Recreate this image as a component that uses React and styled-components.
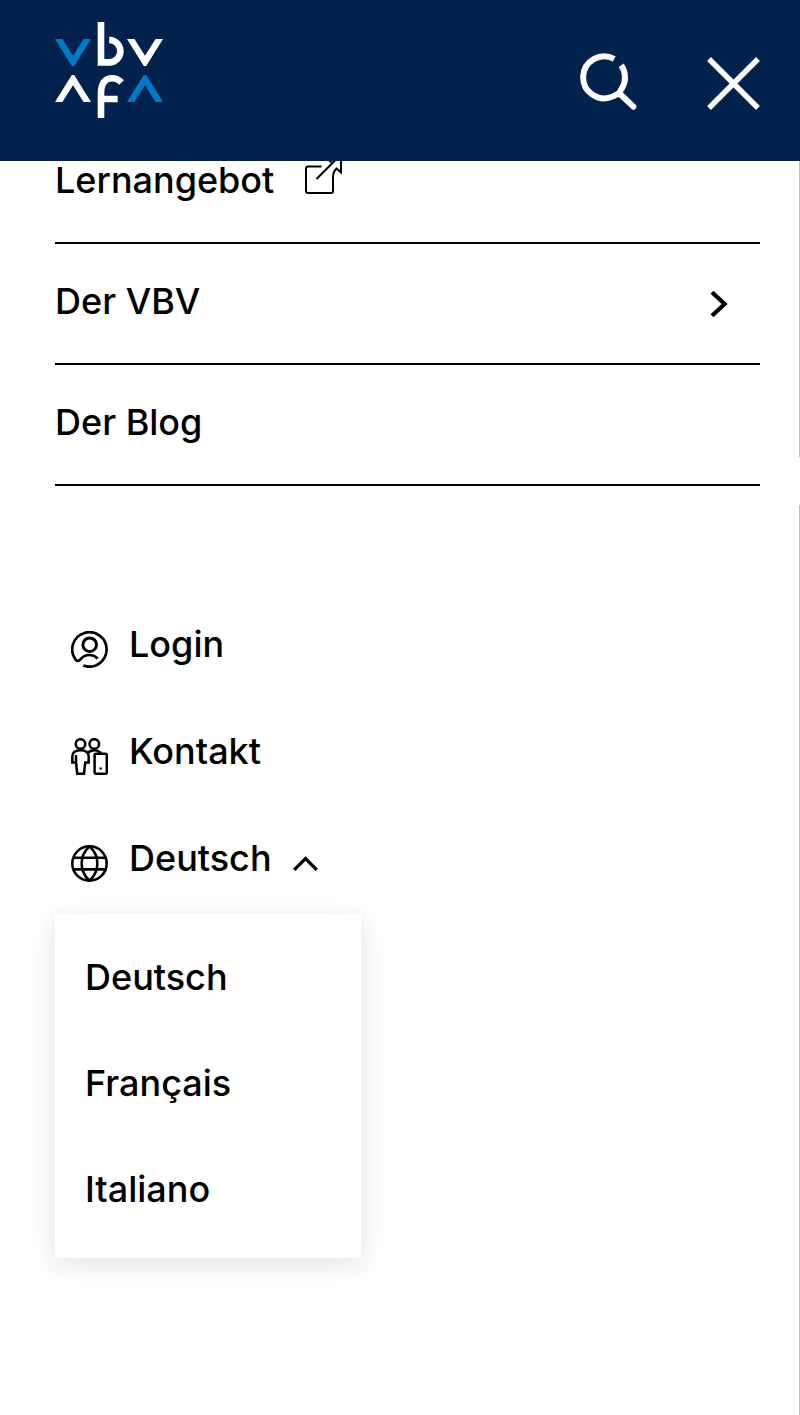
import React, { useState } from "react";
import styled, { createGlobalStyle } from "styled-components";

const GlobalStyle = createGlobalStyle`
    * {
        box-sizing: border-box;
    }

    body {
        margin: 0;
        background: #FFFFFF;
        color: #000000;
        font-family: 'Inter', 'Liberation Sans', sans-serif;
        font-weight: 500;
        font-size: 36px;
        line-height: 42px;
    }

    ul {
        list-style: none;
        margin: 0;
        padding: 0;
    }

    a, button {
        color: inherit;
        font: inherit;
        text-decoration: none;
    }

    button {
        background: none;
        border: none;
        padding: 0;
        cursor: pointer;
    }

    svg {
        display: block;
        flex-shrink: 0;
        fill: none;
    }
`;

function Logo() {
    return (
        <svg width="108" height="96" viewBox="0 0 108 96">
            <path fill="#007AC6" d="M0 17H7.4L18 33.8L28.6 17H36L19.2 44H16.8Z" />
            <path fill="#FFFFFF" d="M72 17H79.4L90 33.8L100.6 17H108L91.2 44H88.8Z" />
            <path fill="#FFFFFF" d="M0 80H7.4L18 63.2L28.6 80H36L19.2 53H16.8Z" />
            <path fill="#007AC6" d="M72 80H79.4L90 63.2L100.6 80H108L91.2 53H88.8Z" />
            <g stroke="#FFFFFF" strokeWidth="6.6">
                <path d="M46 0V40.4H54.2A11.2 11.2 0 0 0 54.2 18" />
                <path d="M46 96V71C46 61 50.5 56.3 57 56.3C61 56.3 64 57.8 66.5 60.5M46 77H62.7" />
            </g>
        </svg>
    )
}

function SearchIcon() {
    return (
        <svg width="57" height="57" viewBox="0 0 57 57" stroke="#FFFFFF" strokeWidth="6">
            <path d="M34.2 5.9A21 21 0 1 0 33 43.4Q37 40.6 40 41" />
            <path d="M41.2 12.3A21 21 0 0 1 41.5 36Q39.3 38.8 40 41" />
            <path d="M39 40L53.4 53.7" strokeLinecap="round" />
        </svg>
    )
}

function CloseIcon() {
    return (
        <svg width="53" height="53" viewBox="0 0 53 53" stroke="#FFFFFF" strokeWidth="5.4">
            <path d="M2 2L51 51M51 2L2 51" />
        </svg>
    )
}

function ExternalIcon() {
    return (
        <svg width="38" height="38" viewBox="0 0 38 38" stroke="#000000" strokeWidth="2">
            <path d="M17.5 10.5H4Q2 10.5 2 12.5V35Q2 37 4 37H27Q29 37 29 35V21C29 17 30.5 14.5 32.5 12.5L37 16.5V1H22L27.5 6.5" />
            <path d="M12.5 23L31 4.5" />
        </svg>
    )
}

function ChevronRight() {
    return (
        <svg width="18" height="28" viewBox="0 0 18 28" stroke="#000000" strokeWidth="4.2">
            <path d="M2 2.3L14.6 14L2 25.7" />
        </svg>
    )
}

function ChevronUp() {
    return (
        <svg width="25" height="37" viewBox="0 0 25 37" stroke="#000000" strokeWidth="3.2">
            <path d="M1.2 24.8L12.5 13.5L23.8 24.8" />
        </svg>
    )
}

function UserIcon() {
    return (
        <svg width="37" height="37" viewBox="0 0 37 37" stroke="#000000" strokeWidth="2.7">
            <path d="M12.3 34.5A17.2 17.2 0 1 0 4.4 28.4C6 30.5 8 30 9.2 28.6C11.5 25.6 15 24 18.7 24C22 24 24.5 25.3 26.7 27.6" />
            <circle cx="18.7" cy="13.7" r="6.8" strokeWidth="3" />
        </svg>
    )
}

function ContactIcon() {
    return (
        <svg width="37" height="37" viewBox="0 0 37 37" stroke="#000000" strokeWidth="2.5">
            <circle cx="9.5" cy="6" r="4.8" />
            <circle cx="23.3" cy="6" r="4.8" />
            <path d="M5 17V24.5H1.3V18.5C1.3 14.5 4.5 12.2 9.5 12.2C14.5 12.2 17.7 14.5 17.7 18.5V24.5H14.2L13 35.8H6.2L5 24" />
            <path d="M16.5 15.2C18.2 13.2 20.5 12.2 23.3 12.2C26 12.2 28 13.2 30 15" />
            <rect x="23.6" y="15.8" width="12.2" height="20" rx="1.5" />
            <circle cx="29.7" cy="30.5" r="1.2" fill="#000000" stroke="none" />
        </svg>
    )
}

function GlobeIcon() {
    return (
        <svg width="37" height="37" viewBox="0 0 37 37" stroke="#000000" strokeWidth="2.6">
            <circle cx="18.5" cy="18.5" r="17.2" />
            <path d="M18.5 1.3C8 11 8 26 18.5 35.7C29 26 29 11 18.5 1.3Z" />
            <path d="M2.3 12.8H34.7M2.3 24.4H34.7" />
        </svg>
    )
}

const languages = [
    { code: "de", label: "Deutsch" },
    { code: "fr", label: "Français" },
    { code: "it", label: "Italiano" },
];

export default function App() {
    const [open, setOpen] = useState(true);
    const [language, setLanguage] = useState("Deutsch");

    return (
        <>
            <GlobalStyle />
            <Page>
                <Header>
                    <a href="#home" aria-label="VBV Startseite"><Logo /></a>
                    <Actions>
                        <button type="button" aria-label="Suche"><SearchIcon /></button>
                        <button type="button" aria-label="Menü schliessen"><CloseIcon /></button>
                    </Actions>
                </Header>
                <ScrollEdge aria-hidden="true" />
                <Menu>
                    <ul>
                        <li>
                            <MenuRow href="#lernangebot">Lernangebot <ExternalIcon /></MenuRow>
                        </li>
                        <li>
                            <MenuRow href="#vbv" $spread>Der VBV <ChevronRight /></MenuRow>
                        </li>
                        <li>
                            <MenuRow href="#blog">Der Blog</MenuRow>
                        </li>
                    </ul>
                    <MetaList>
                        <li>
                            <MetaRow href="#login"><UserIcon /> Login</MetaRow>
                        </li>
                        <li>
                            <MetaRow href="#kontakt"><ContactIcon /> Kontakt</MetaRow>
                        </li>
                        <li>
                            <MetaRow as="button" type="button" aria-expanded={open} onClick={() => setOpen(!open)}>
                                <GlobeIcon /> {language} <ChevronUp />
                            </MetaRow>
                            {open && (
                                <LanguagePanel>
                                    {languages.map((item) => (
                                        <li key={item.code}>
                                            <LanguageLink href={"#" + item.code} lang={item.code} onClick={() => setLanguage(item.label)}>
                                                {item.label}
                                            </LanguageLink>
                                        </li>
                                    ))}
                                </LanguagePanel>
                            )}
                        </li>
                    </MetaList>
                </Menu>
            </Page>
        </>
    )
}

const Page = styled.div`
    position: relative;
    min-height: 100vh;
`

const Header = styled.header`
    position: sticky;
    top: 0;
    z-index: 2;
    display: flex;
    align-items: flex-start;
    justify-content: space-between;
    padding: 22px 40px 43px 55px;
    background: #00224D;
`

const Actions = styled.div`
    display: flex;
    align-items: flex-end;
    gap: 70px;
    padding-top: 31px;
`

// thin line on the right edge, interrupted by the scroll handle
const ScrollEdge = styled.div`
    position: absolute;
    top: 161px;
    right: 0;
    bottom: 0;
    width: 1px;
    background: linear-gradient(#BEBEBE 296px, #FFFFFF 296px, #FFFFFF 344px, #BEBEBE 344px);
`

// the list is scrolled a little way under the header
const Menu = styled.nav`
    margin-top: -38px;
    padding: 0 40px 0 55px;
`

const MenuRow = styled.a`
    display: flex;
    align-items: center;
    justify-content: ${(props) => (props.$spread ? "space-between" : "flex-start")};
    gap: 30px;
    padding: 36px 32px 41px 0;
    border-bottom: 2px solid #000000;

    svg {
        margin: ${(props) => (props.$spread ? "6px 0 0" : "-10px 0 0")};
    }
`

const MetaList = styled.ul`
    padding-top: 104px;
`

const MetaRow = styled.a`
    display: flex;
    align-items: flex-start;
    gap: 21px;
    padding: 33px 16px 32px;

    svg {
        margin-top: 8px;
        margin-bottom: -3px;
    }
`

const LanguagePanel = styled.ul`
    width: 306px;
    margin-top: 3px;
    padding: 10px 0 16px;
    background: #FFFFFF;
    box-shadow: 0 6px 30px rgba(0, 0, 0, 0.12);
`

const LanguageLink = styled.a`
    display: block;
    padding: 32px 30px;
`
